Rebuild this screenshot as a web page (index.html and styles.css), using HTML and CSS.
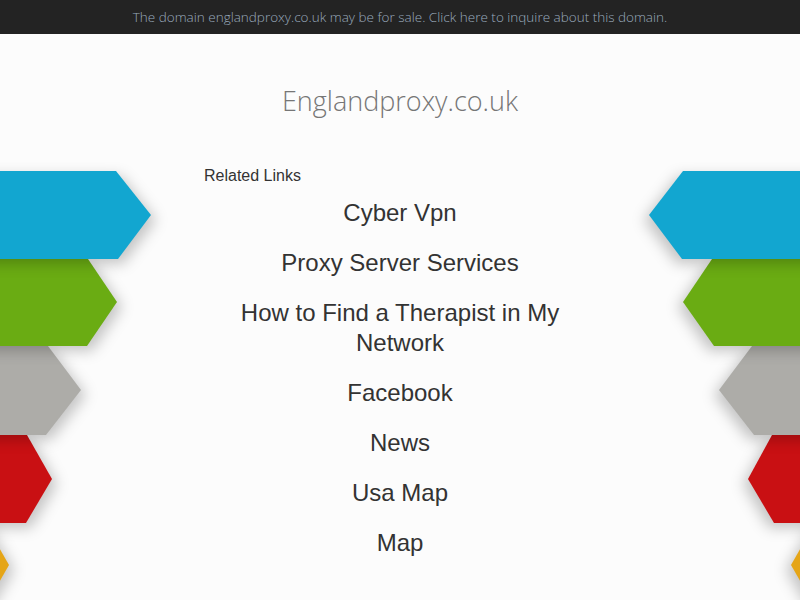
FILE: index.html
```html
<!DOCTYPE html>
<html lang="en">
<head>
<meta charset="utf-8">
<title>Englandproxy.co.uk</title>
<link rel="stylesheet" href="styles.css">
</head>
<body>
<div class="topbar"><a class="topbar-link" href="#">The domain englandproxy.co.uk may be for sale. Click here to inquire about this domain.</a></div>
<div class="page">
  <svg class="deco deco-left" width="170" height="460" viewBox="0 160 170 460" aria-hidden="true">
    <polygon class="s-yellow" points="-100,523 -15,523 9,565 -15,607 -100,607"/>
    <polygon class="s-red" points="-100,435 27,435 52,479 26,523 -100,523"/>
    <polygon class="s-gray" points="-100,346 48,346 81,390 46,435 -100,435"/>
    <polygon class="s-green" points="-100,259 88,259 117,302 87,346 -100,346"/>
    <polygon class="s-blue" points="-100,171 116,171 151,215 118,259 -100,259"/>
  </svg>
  <svg class="deco deco-right" width="170" height="460" viewBox="630 160 170 460" aria-hidden="true">
    <polygon class="s-yellow" points="900,523 815,523 791,565 815,607 900,607"/>
    <polygon class="s-red" points="900,435 772,435 748,479 774,523 900,523"/>
    <polygon class="s-gray" points="900,346 752,346 719,390 754,435 900,435"/>
    <polygon class="s-green" points="900,259 712,259 683,302 714,346 900,346"/>
    <polygon class="s-blue" points="900,171 683,171 649,215 682,259 900,259"/>
  </svg>
  <h1 class="title">Englandproxy.co.uk</h1>
  <div class="links">
    <div class="links-head">Related Links</div>
    <ul class="link-list">
      <li><a href="#">Cyber Vpn</a></li>
      <li><a href="#">Proxy Server Services</a></li>
      <li><a href="#">How to Find a Therapist in My Network</a></li>
      <li><a href="#">Facebook</a></li>
      <li><a href="#">News</a></li>
      <li><a href="#">Usa Map</a></li>
      <li><a href="#">Map</a></li>
    </ul>
  </div>
</div>
</body>
</html>
```
FILE: styles.css
```css
html, body {
  margin: 0;
  padding: 0;
  height: 100%;
  overflow: hidden;
}
body {
  background: #fcfcfc;
  font-family: "Liberation Sans", Arial, sans-serif;
}
.topbar {
  background: #232323;
  height: 34px;
  display: flex;
  align-items: center;
  justify-content: center;
}
.topbar-link {
  color: #9aaabd;
  text-decoration: none;
  font-family: "Open Sans", sans-serif;
  font-weight: 300;
  font-size: 13.5px;
}
.page {
  position: relative;
  height: 566px;
  display: flex;
  flex-direction: column;
  align-items: center;
}
.deco {
  position: absolute;
  top: 126px;
}
.deco-left { left: 0; }
.deco-right { right: 0; }
.deco-left polygon { filter: drop-shadow(5px 5px 7px rgba(0,0,0,0.22)); }
.deco-right polygon { filter: drop-shadow(-5px 5px 7px rgba(0,0,0,0.22)); }
.s-blue { fill: #12a6d0; }
.s-green { fill: #6aac13; }
.s-gray { fill: #adaca8; }
.s-red { fill: #c91013; }
.s-yellow { fill: #e5a517; }
.title {
  margin: 50px 0 0;
  font-family: "Open Sans", sans-serif;
  font-weight: 300;
  font-size: 27px;
  line-height: 34px;
  color: #767676;
  position: relative;
}
.links {
  width: 392px;
  margin-top: 49px;
  position: relative;
}
.links-head {
  font-size: 16px;
  line-height: 18px;
  color: #333;
}
.link-list {
  list-style: none;
  margin: 13px 0 0;
  padding: 0;
  display: flex;
  flex-direction: column;
  gap: 20px;
  text-align: center;
}
.link-list a {
  color: #333;
  text-decoration: none;
  font-size: 24px;
  line-height: 30px;
}
```
